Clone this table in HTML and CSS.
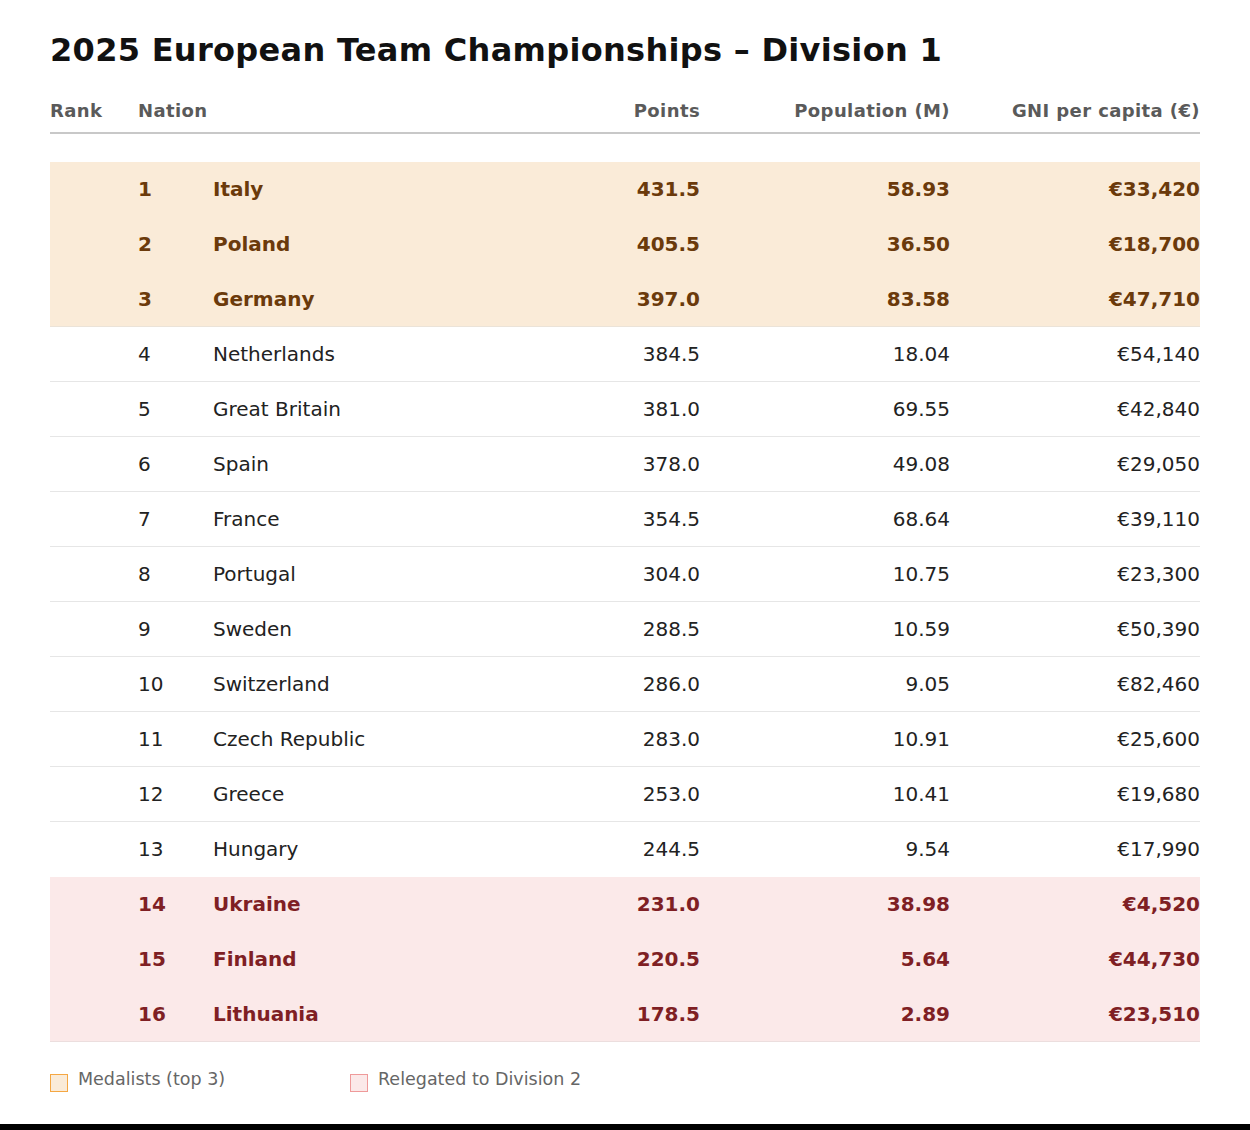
FILE: index.html
```html
<!DOCTYPE html>
<html lang="en">
<head>
<meta charset="utf-8">
<title>2025 European Team Championships – Division 1</title>
<link rel="stylesheet" href="styles.css">
</head>
<body>
<main class="page">
  <h1 class="title">2025 European Team Championships – Division 1</h1>
  <div class="table">
    <div class="head">
      <div class="c-rankh">Rank</div>
      <div class="c-nationh">Nation</div>
      <div class="c-num">Points</div>
      <div class="c-num">Population (M)</div>
      <div class="c-num">GNI per capita (€)</div>
    </div>
    <div class="spacer"></div>
    <div class="row medal"><div></div><div>1</div><div>Italy</div><div class="c-num">431.5</div><div class="c-num">58.93</div><div class="c-num">€33,420</div></div>
    <div class="row medal"><div></div><div>2</div><div>Poland</div><div class="c-num">405.5</div><div class="c-num">36.50</div><div class="c-num">€18,700</div></div>
    <div class="row medal last"><div></div><div>3</div><div>Germany</div><div class="c-num">397.0</div><div class="c-num">83.58</div><div class="c-num">€47,710</div></div>
    <div class="row"><div></div><div>4</div><div>Netherlands</div><div class="c-num">384.5</div><div class="c-num">18.04</div><div class="c-num">€54,140</div></div>
    <div class="row"><div></div><div>5</div><div>Great Britain</div><div class="c-num">381.0</div><div class="c-num">69.55</div><div class="c-num">€42,840</div></div>
    <div class="row"><div></div><div>6</div><div>Spain</div><div class="c-num">378.0</div><div class="c-num">49.08</div><div class="c-num">€29,050</div></div>
    <div class="row"><div></div><div>7</div><div>France</div><div class="c-num">354.5</div><div class="c-num">68.64</div><div class="c-num">€39,110</div></div>
    <div class="row"><div></div><div>8</div><div>Portugal</div><div class="c-num">304.0</div><div class="c-num">10.75</div><div class="c-num">€23,300</div></div>
    <div class="row"><div></div><div>9</div><div>Sweden</div><div class="c-num">288.5</div><div class="c-num">10.59</div><div class="c-num">€50,390</div></div>
    <div class="row"><div></div><div>10</div><div>Switzerland</div><div class="c-num">286.0</div><div class="c-num">9.05</div><div class="c-num">€82,460</div></div>
    <div class="row"><div></div><div>11</div><div>Czech Republic</div><div class="c-num">283.0</div><div class="c-num">10.91</div><div class="c-num">€25,600</div></div>
    <div class="row"><div></div><div>12</div><div>Greece</div><div class="c-num">253.0</div><div class="c-num">10.41</div><div class="c-num">€19,680</div></div>
    <div class="row plain-last"><div></div><div>13</div><div>Hungary</div><div class="c-num">244.5</div><div class="c-num">9.54</div><div class="c-num">€17,990</div></div>
    <div class="row releg"><div></div><div>14</div><div>Ukraine</div><div class="c-num">231.0</div><div class="c-num">38.98</div><div class="c-num">€4,520</div></div>
    <div class="row releg"><div></div><div>15</div><div>Finland</div><div class="c-num">220.5</div><div class="c-num">5.64</div><div class="c-num">€44,730</div></div>
    <div class="row releg last"><div></div><div>16</div><div>Lithuania</div><div class="c-num">178.5</div><div class="c-num">2.89</div><div class="c-num">€23,510</div></div>
  </div>
  <div class="legend">
    <div class="legend-item"><span class="swatch swatch-medal"></span>Medalists (top 3)</div>
    <div class="legend-item"><span class="swatch swatch-releg"></span>Relegated to Division 2</div>
  </div>
</main>
</body>
</html>
```
FILE: styles.css
```css
html {
  background: #000;
}
body {
  margin: 0;
  background: #fff;
  font-family: "DejaVu Sans", "Noto Sans", sans-serif;
  color: #222;
}
.page {
  height: 1124px;
  box-sizing: border-box;
  padding: 32px 50px 0 50px;
  background: #fff;
}
.title {
  margin: 0;
  font-size: 32px;
  font-weight: bold;
  line-height: 37px;
  letter-spacing: 0.3px;
  color: #111;
}
.table {
  margin-top: 31px;
}
.head,
.row {
  display: grid;
  grid-template-columns: 88px 75px 1fr 150px 250px 250px;
  align-items: center;
}
.head {
  height: 32px;
  border-bottom: 2px solid #c8c8c8;
  font-size: 18px;
  font-weight: bold;
  color: #5a5a5a;
  letter-spacing: 0.4px;
  align-items: start;
}
.c-rankh {
  grid-column: 1;
}
.c-nationh {
  grid-column: 2 / 4;
}
.c-num {
  text-align: right;
}
.spacer {
  height: 28px;
}
.row {
  height: 55px;
  box-sizing: border-box;
  font-size: 20px;
  color: #222;
  border-bottom: 1px solid #e6e6e6;
  padding-bottom: 1px;
}
.row.medal {
  background: #faebd8;
  color: #6b3a0b;
  font-weight: bold;
  border-bottom: none;
}
.row.medal.last {
  border-bottom: 1px solid #ebe3d8;
}
.row.releg {
  background: #fbe9e9;
  color: #7f1f24;
  font-weight: bold;
  border-bottom: none;
}
.row.releg.last {
  border-bottom: 1px solid #ecdede;
}
.row.plain-last {
  border-bottom: none;
}
.legend {
  display: flex;
  margin-top: 24px;
  font-size: 17.5px;
  color: #666;
}
.legend-item {
  display: flex;
  align-items: center;
  width: 300px;
}
.swatch {
  width: 16px;
  height: 16px;
  margin-right: 10px;
  margin-top: 8px;
  display: inline-block;
}
.swatch-medal {
  background: #faebd8;
  border: 1px solid #f5a742;
}
.swatch-releg {
  background: #fbe9e9;
  border: 1px solid #ef9a9a;
}
```
